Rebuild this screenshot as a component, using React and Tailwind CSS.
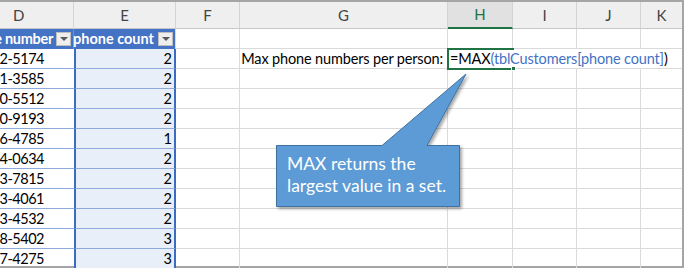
const phones = [
  ["(206) 462-5174", 2],
  ["(425) 601-3585", 2],
  ["(360) 200-5512", 2],
  ["(253) 870-9193", 2],
  ["(206) 746-4785", 1],
  ["(425) 564-0634", 2],
  ["(360) 353-7815", 2],
  ["(253) 323-4061", 2],
  ["(206) 883-4532", 2],
  ["(425) 328-5402", 3],
  ["(360) 777-4275", 3],
];

const font = { fontFamily: "Lato, 'Open Sans', sans-serif" };

// plain grid cells for columns F..K
const Blanks = () => (
  <>
    <div className="w-[64px] shrink-0 border-r border-b border-[#dadada]" />
    <div className="w-[208px] shrink-0 border-r border-b border-[#dadada]" />
    <div className="w-[65px] shrink-0 border-r border-b border-[#dadada]" />
    <div className="w-[64px] shrink-0 border-r border-b border-[#dadada]" />
    <div className="w-[64px] shrink-0 border-r border-b border-[#dadada]" />
    <div className="flex-1 border-b border-[#dadada]" />
  </>
);

const DropButton = () => (
  <div className="w-[15px] h-[14px] bg-[#eeeeee] border border-[#bdbdbd] flex items-center justify-center shrink-0">
    <div className="w-0 h-0 border-l-[4px] border-r-[4px] border-t-[4px] border-l-transparent border-r-transparent border-t-[#595959]" />
  </div>
);

const ColHeader = ({ label, w, active }) => (
  <div
    className={`${w} shrink-0 flex items-center justify-center text-[15px] border-r border-[#d4d4d4] ${
      active
        ? "bg-[#e1e1e1] text-[#217346] border-b-2 border-b-[#217346]"
        : "text-[#444444] border-b border-b-[#c6c6c6]"
    }`}
  >
    {label}
  </div>
);

export default function App() {
  return (
    <div className="relative w-[684px] h-[268px] overflow-hidden bg-white" style={font}>
      <div className="h-full flex flex-col border-t-2 border-r-2 border-b-2 border-[#a5a5a5]">
        {/* Column letters */}
        <div className="flex h-[27px] shrink-0 bg-[#efefef]">
          <div className="w-[74px] shrink-0 flex items-center pl-[13px] text-[15px] text-[#444444] border-r border-b border-[#d4d4d4] border-b-[#c6c6c6]">
            D
          </div>
          <ColHeader label="E" w="w-[102px]" />
          <ColHeader label="F" w="w-[64px]" />
          <ColHeader label="G" w="w-[208px]" />
          <ColHeader label="H" w="w-[65px]" active />
          <ColHeader label="I" w="w-[64px]" />
          <ColHeader label="J" w="w-[64px]" />
          <div className="flex-1 flex items-center justify-center text-[15px] text-[#444444] border-b border-[#c6c6c6]">
            K
          </div>
        </div>

        {/* Table header row */}
        <div className="flex h-[20px] shrink-0 text-[14.5px]">
          <div className="w-[74px] shrink-0 bg-[#4472c4] flex items-center justify-end gap-[3px] pr-[2px] overflow-hidden border-r border-[#6d8fd0]">
            <span className="whitespace-nowrap font-bold text-white tracking-[-0.3px]">phone number</span>
            <DropButton />
          </div>
          <div className="w-[102px] shrink-0 bg-[#4472c4] flex items-center justify-end gap-[4px] pr-[2px] border-r border-[#dadada]">
            <span className="whitespace-nowrap font-bold text-white">phone count</span>
            <DropButton />
          </div>
          <Blanks />
        </div>

        {/* Data rows */}
        {phones.map(([num, count], i) => (
          <div key={num} className="flex h-[20px] shrink-0 text-[14.5px] text-black">
            <div className="w-[74px] shrink-0 flex items-center justify-end overflow-hidden pr-[30px] border-b border-[#8eaadb]">
              <span className="whitespace-nowrap tracking-[-0.5px]">{num}</span>
            </div>
            <div className="w-[102px] shrink-0 flex items-center justify-end pr-[2px] bg-[#e9eff8] border-x-2 border-x-[#3b6cc2] border-b border-b-[#8eaadb]">
              {count}
            </div>
            {i === 0 ? (
              <>
                <div className="w-[64px] shrink-0 border-r border-b border-[#dadada]" />
                <div className="w-[208px] shrink-0 flex items-center justify-end pr-[4px] border-r border-b border-[#dadada] whitespace-nowrap tracking-[-0.15px]">
                  Max phone numbers per person:
                </div>
                <div className="w-[65px] shrink-0 relative border-b border-[#dadada]">
                  <div className="absolute -left-[1px] -top-[1px] w-[67px] h-[22px] border-2 border-r-0 border-[#217346]" />
                  <div className="absolute right-[-3px] bottom-[-3px] w-[5px] h-[5px] bg-[#217346] border border-white" />
                  <div className="absolute left-[2px] top-0 h-full flex items-center whitespace-nowrap z-10 tracking-[-0.15px]">
                    <span>=MAX</span>
                    <span className="text-[#4472c4]">(tblCustomers[phone count]</span>
                    <span>)</span>
                  </div>
                </div>
                <div className="w-[64px] shrink-0 border-b border-[#dadada]" />
                <div className="w-[64px] shrink-0 border-b border-[#dadada]" />
                <div className="flex-1 border-b border-[#dadada]" />
              </>
            ) : (
              <Blanks />
            )}
          </div>
        ))}
      </div>

      {/* Callout shape */}
      <svg className="absolute left-0 top-0 pointer-events-none" width="684" height="268">
        <defs>
          <filter id="sh" x="-10%" y="-10%" width="130%" height="130%">
            <feDropShadow dx="2" dy="2" stdDeviation="1.5" floodColor="#000" floodOpacity="0.35" />
          </filter>
        </defs>
        <path
          d="M276.5 145.5 L382 145.5 L466 74 L427 145.5 L459.5 145.5 L459.5 206.5 L276.5 206.5 Z"
          fill="#5b9bd5"
          stroke="#41719c"
          strokeWidth="1"
          filter="url(#sh)"
        />
      </svg>
      <div className="absolute left-[287px] top-[153px] text-white text-[17.5px] leading-[22px]">
        <div>MAX returns the</div>
        <div>largest value in a set.</div>
      </div>
    </div>
  );
}
